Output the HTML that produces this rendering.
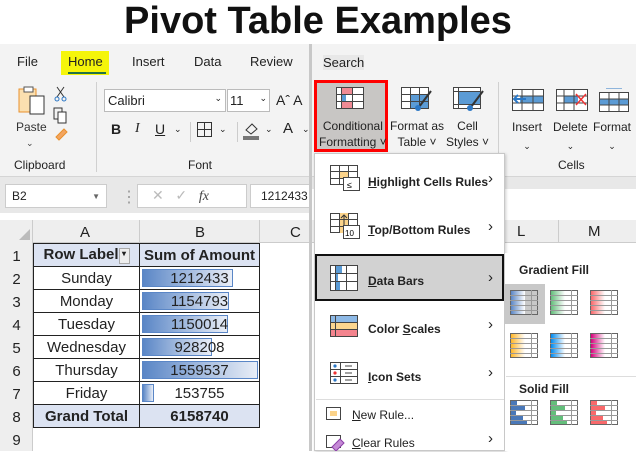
<!DOCTYPE html>
<html><head><meta charset="utf-8"><style>
*{margin:0;padding:0;box-sizing:border-box}
body{width:636px;height:451px;position:relative;overflow:hidden;background:#fff;font-family:"Liberation Sans",sans-serif;color:#222}
.a{position:absolute;white-space:nowrap}
.c{font-family:"Liberation Sans",sans-serif}
.grid td{border:1px solid #222;height:23px;font-size:15px;text-align:center;padding:0;position:relative}
.bar{position:absolute;left:2px;top:2px;height:18px;border:1px solid #5a86c6;background:linear-gradient(90deg,#5a86c6,#e9eef7)}
.grid td span{position:relative}
.ch{position:absolute;left:488px;font-size:15px}
</style></head><body>
<div class="a" style="left:0;top:0px;width:636px;text-align:center;font-size:38px;font-weight:bold;color:#111">Pivot Table Examples</div>

<div class="a" style="left:0;top:44px;width:311px;height:407px;background:#f3f3f3"></div>
<div class="a c" style="left:17px;top:54px;font-size:13px">File</div>
<div class="a" style="left:61px;top:51px;width:48px;height:24px;background:#f5f50a"></div>
<div class="a c" style="left:68px;top:54px;font-size:13px">Home</div>
<div class="a" style="left:68px;top:72px;width:38px;height:2px;background:#217346"></div>
<div class="a c" style="left:132px;top:54px;font-size:13px">Insert</div>
<div class="a c" style="left:194px;top:54px;font-size:13px">Data</div>
<div class="a c" style="left:250px;top:54px;font-size:13px">Review</div>
<svg class="a" style="left:16px;top:84px" width="54" height="74"><rect x="3" y="5" width="17" height="23" fill="#fbe0b0" stroke="#e8902c"/><rect x="14" y="12" width="14" height="18" fill="#fff" stroke="#333"/><rect x="8" y="3" width="9" height="5" fill="#fff" stroke="#555"/><text x="0" y="47" font-size="12" fill="#333" font-family="Liberation Sans">Paste</text><text x="10" y="62" font-size="9" fill="#444">⌄</text></svg>
<svg class="a" style="left:52px;top:85px" width="20" height="66"><path d="M5 2 L12 12 M12 2 L5 12" stroke="#333"/><circle cx="5" cy="14" r="2" fill="none" stroke="#2b77c5"/><circle cx="12" cy="14" r="2" fill="none" stroke="#2b77c5"/><rect x="2" y="23" width="8" height="11" fill="none" stroke="#333"/><rect x="6" y="27" width="8" height="11" fill="#fff" stroke="#333"/><path d="M4 52 l8 -8 l3 3 l-8 8z" fill="#f3a560" stroke="#e8902c"/></svg>
<div class="a c" style="left:14px;top:158px;font-size:12px">Clipboard</div>
<div class="a" style="left:96px;top:82px;width:1px;height:90px;background:#d0d0d0"></div>
<div class="a" style="left:104px;top:89px;width:122px;height:23px;background:#fff;border:1px solid #bbb;font-size:13px;padding:3px 3px">Calibri<span style="float:right;font-size:9px">⌄</span></div>
<div class="a" style="left:227px;top:89px;width:43px;height:23px;background:#fff;border:1px solid #bbb;font-size:13px;padding:3px 2px">11<span style="float:right;font-size:9px">⌄</span></div>
<div class="a c" style="left:276px;top:92px;font-size:14px">Aˆ A</div>
<div class="a c" style="left:111px;top:121px;font-size:14px;font-weight:bold">B</div>
<div class="a" style="left:135px;top:121px;font-size:14px;font-style:italic;font-family:'Liberation Serif'">I</div>
<div class="a c" style="left:155px;top:121px;font-size:14px;text-decoration:underline">U</div>
<div class="a" style="left:174px;top:124px;font-size:9px">⌄</div>
<div class="a" style="left:190px;top:122px;width:1px;height:20px;background:#ccc"></div>
<svg class="a" style="left:197px;top:122px" width="16" height="16"><rect x=".5" y=".5" width="14" height="14" fill="none" stroke="#333"/><path d="M7.5 0V15M0 7.5H15" stroke="#333"/></svg>
<div class="a" style="left:219px;top:124px;font-size:9px">⌄</div>
<div class="a" style="left:237px;top:122px;width:1px;height:20px;background:#ccc"></div>
<svg class="a" style="left:243px;top:120px" width="18" height="20"><path d="M3 10 L9 4 L14 9 L8 14z" fill="none" stroke="#333"/><rect x="0" y="16" width="16" height="4" fill="#777"/></svg>
<div class="a" style="left:265px;top:124px;font-size:9px">⌄</div>
<div class="a c" style="left:283px;top:120px;font-size:15px">A</div>
<div class="a" style="left:302px;top:124px;font-size:9px">⌄</div>
<div class="a c" style="left:188px;top:158px;font-size:12px">Font</div>
<div class="a" style="left:0;top:176px;width:311px;height:1px;background:#d5d5d5"></div>
<div class="a" style="left:0;top:177px;width:311px;height:36px;background:#e8e8e8"></div>
<div class="a" style="left:5px;top:184px;width:102px;height:24px;background:#fff;border:1px solid #ccc;font-size:12px;padding:4px 6px">B2<span style="float:right;color:#666;font-size:8px;margin-top:3px">▼</span></div>
<div class="a" style="left:121px;top:187px;color:#999">⋮</div>
<div class="a" style="left:137px;top:184px;width:110px;height:24px;background:#fff;border:1px solid #ccc;color:#bbb;font-size:14px;padding:2px 14px">✕ &nbsp; ✓ &nbsp;&nbsp;<i style="color:#444;font-family:'Liberation Serif'">fx</i></div>
<div class="a" style="left:250px;top:184px;width:61px;height:24px;background:#fff;border:1px solid #ccc;font-size:12px;padding:4px 10px">1212433</div>
<div class="a" style="left:0;top:213px;width:311px;height:238px;background:#fff"></div>
<div class="a" style="left:0;top:220px;width:311px;height:23px;background:#eee;border-bottom:1px solid #ccc"></div>
<div class="a" style="left:0;top:220px;width:33px;height:231px;background:#eee;border-right:1px solid #ccc"></div>
<div class="a" style="left:19px;top:229px;width:0;height:0;border-left:11px solid transparent;border-bottom:11px solid #bbb"></div>
<div class="a c" style="left:80px;top:224px;font-size:15px">A</div>
<div class="a c" style="left:195px;top:224px;font-size:15px">B</div>
<div class="a c" style="left:290px;top:224px;font-size:15px">C</div>
<div class="a" style="left:139px;top:220px;width:1px;height:23px;background:#ccc"></div>
<div class="a" style="left:259px;top:220px;width:1px;height:23px;background:#ccc"></div>
<div class="a c" style="left:0;top:245px;width:33px;text-align:center;font-size:15px;line-height:23px">1<br>2<br>3<br>4<br>5<br>6<br>7<br>8<br>9</div>
<table class="a grid" style="left:33px;top:243px;border-collapse:collapse;width:227px">
<tr style="background:#dce3f2;font-weight:bold"><td style="width:106px">Row Label<span style="display:inline-block;width:11px;height:16px;border:1px solid #aaa;background:#eee;font-size:8px;vertical-align:middle">▾</span></td><td>Sum of Amount</td></tr>
<tr><td>Sunday</td><td><div class="bar" style="width:91px"></div><span>1212433</span></td></tr>
<tr><td>Monday</td><td><div class="bar" style="width:87px"></div><span>1154793</span></td></tr>
<tr><td>Tuesday</td><td><div class="bar" style="width:86px"></div><span>1150014</span></td></tr>
<tr><td>Wednesday</td><td><div class="bar" style="width:70px"></div><span>928208</span></td></tr>
<tr><td>Thursday</td><td><div class="bar" style="width:116px"></div><span>1559537</span></td></tr>
<tr><td>Friday</td><td><div class="bar" style="width:12px"></div><span>153755</span></td></tr>
<tr style="background:#dce3f2;font-weight:bold"><td>Grand Total</td><td>6158740</td></tr>
</table>
<div class="a" style="left:309px;top:44px;width:3px;height:407px;background:#c8c8c8"></div>

<div class="a" style="left:312px;top:44px;width:324px;height:407px;background:#f3f3f3"></div>
<div class="a c" style="left:323px;top:55px;font-size:13px;background:#e8e8e8">Search</div>
<div class="a" style="left:314px;top:80px;width:74px;height:72px;background:#c8c6c4;border:3px solid #f00"></div>
<svg class="a" style="left:336px;top:87px" width="28" height="24"><rect x=".5" y=".5" width="27" height="21" fill="#fff" stroke="#444"/><rect x="5" y="1" width="11" height="6" fill="#f08a94"/><rect x="5" y="15" width="11" height="6" fill="#f08a94"/><rect x="5" y="8" width="5" height="7" fill="#5b9bd5"/><path d="M0 7.5H28M0 14.5H28M5.5 0V22M16.5 0V22" stroke="#444"/></svg>
<div class="a c" style="left:319px;top:118px;font-size:12px;line-height:16px;text-align:center">Conditional<br>Formatting ˅</div>
<svg class="a" style="left:401px;top:87px" width="32" height="26"><rect x=".5" y=".5" width="27" height="21" fill="#fff" stroke="#444"/><rect x="10" y="8" width="17" height="13" fill="#5b9bd5"/><path d="M0 7.5H28M0 14.5H28M9.5 0V22M18.5 0V22" stroke="#444"/><path d="M30 4 L18 20" stroke="#333" stroke-width="2"/><circle cx="17" cy="21" r="3" fill="#2b77c5"/></svg>
<div class="a c" style="left:390px;top:118px;font-size:12px;line-height:16px;text-align:center">Format as<br>Table ˅</div>
<svg class="a" style="left:453px;top:87px" width="32" height="26"><rect x=".5" y=".5" width="27" height="21" fill="#fff" stroke="#444"/><rect x="6" y="5" width="21" height="12" fill="#5b9bd5"/><path d="M0 4.5H28M0 17.5H28M5.5 0V22" stroke="#444"/><path d="M30 4 L18 20" stroke="#333" stroke-width="2"/><circle cx="17" cy="21" r="3" fill="#2b77c5"/></svg>
<div class="a c" style="left:446px;top:118px;font-size:12px;line-height:16px;text-align:center">Cell<br>Styles ˅</div>
<div class="a" style="left:498px;top:82px;width:1px;height:90px;background:#d0d0d0"></div>
<svg class="a" style="left:512px;top:88px" width="124" height="26"><rect x=".5" y="1.5" width="31" height="21" fill="#fff" stroke="#444"/><rect x="8" y="8" width="23" height="7" fill="#5b9bd5"/><path d="M0 8H32M0 15H32M10 1V23M21 1V23" stroke="#444"/><path d="M14 11H2 M6 7 L2 11 L6 15" stroke="#2b77c5" stroke-width="2" fill="none"/>
<rect x="44.5" y="1.5" width="31" height="21" fill="#fff" stroke="#444"/><rect x="52" y="8" width="14" height="7" fill="#5b9bd5"/><path d="M44 8H76M44 15H76M52 1V23M62 1V23" stroke="#444"/><path d="M64 6 L74 17 M74 6 L64 17" stroke="#e33" stroke-width="1.5"/>
<rect x="87.5" y="4.5" width="29" height="19" fill="#fff" stroke="#444"/><rect x="88" y="11" width="28" height="6" fill="#5b9bd5"/><path d="M87 11H117M87 17H117M97 4V24M107 4V24" stroke="#444"/><path d="M94 0H110" stroke="#2b77c5"/></svg>
<div class="a c" style="left:512px;top:118px;font-size:12px;line-height:18px;text-align:center">Insert<br><span style="font-size:9px">⌄</span></div>
<div class="a c" style="left:553px;top:118px;font-size:12px;line-height:18px;text-align:center">Delete<br><span style="font-size:9px">⌄</span></div>
<div class="a c" style="left:593px;top:118px;font-size:12px;line-height:18px;text-align:center">Format<br><span style="font-size:9px">⌄</span></div>
<div class="a c" style="left:558px;top:158px;font-size:12px">Cells</div>
<div class="a" style="left:312px;top:176px;width:324px;height:1px;background:#d5d5d5"></div>
<div class="a" style="left:312px;top:177px;width:324px;height:12px;background:#e8e8e8"></div>
<div class="a" style="left:312px;top:189px;width:324px;height:262px;background:#fff"></div>
<div class="a" style="left:312px;top:220px;width:324px;height:23px;background:#eee;border-bottom:1px solid #ccc"></div>
<div class="a c" style="left:517px;top:223px;font-size:15px">L</div>
<div class="a c" style="left:588px;top:223px;font-size:15px">M</div>
<div class="a" style="left:558px;top:220px;width:1px;height:23px;background:#ccc"></div>
<div class="a" style="left:314px;top:153px;width:191px;height:298px;background:#fff;border:1px solid #c8c8c8;box-shadow:1px 1px 3px rgba(0,0,0,.2)"></div>
<div class="a" style="left:315px;top:254px;width:189px;height:47px;background:#d2d2d2;border:2px solid #111"></div>
<svg class="a" style="left:330px;top:165px" width="32" height="270">
<g><rect x=".5" y=".5" width="27" height="19" fill="#fff" stroke="#444"/><rect x="9" y="6" width="9" height="7" fill="#fbd38a"/><path d="M0 6.5H28M0 13.5H28M9.5 0V20M18.5 0V20" stroke="#444"/><rect x="13.5" y="12.5" width="16" height="13" fill="#fff" stroke="#444"/><text x="17" y="23" font-size="9">≤</text></g>
<g transform="translate(0,48)"><rect x=".5" y=".5" width="27" height="19" fill="#fff" stroke="#444"/><rect x="9" y="0" width="9" height="20" fill="#fbd38a"/><path d="M0 6.5H28M0 13.5H28M9.5 0V20M18.5 0V20" stroke="#444"/><path d="M14 12V2 M11 5 L14 2 L17 5" stroke="#333" fill="none"/><rect x="13.5" y="12.5" width="16" height="13" fill="#fff" stroke="#444"/><text x="15" y="23" font-size="8">10</text></g>
<g transform="translate(0,100)"><rect x=".5" y=".5" width="27" height="25" fill="#fff" stroke="#444"/><rect x="5" y="1" width="7" height="7" fill="#5b9bd5"/><rect x="5" y="8" width="3" height="8" fill="#5b9bd5"/><rect x="5" y="16" width="5" height="9" fill="#5b9bd5"/><path d="M0 8.5H28M0 16.5H28M5.5 0V26M16.5 0V26" stroke="#444"/></g>
<g transform="translate(0,150)"><rect x="0" y="0" width="28" height="7" fill="#8db9e6"/><rect x="0" y="7" width="28" height="7" fill="#fcd68f"/><rect x="0" y="14" width="28" height="7" fill="#f4848e"/><rect x=".5" y=".5" width="27" height="21" fill="none" stroke="#444"/><path d="M0 7.5H28M0 14.5H28M5.5 0V22" stroke="#444"/></g>
<g transform="translate(0,197)"><rect x=".5" y=".5" width="27" height="21" fill="#fff" stroke="#444"/><path d="M0 7.5H28M0 14.5H28M10.5 0V22" stroke="#444"/><circle cx="5" cy="4" r="1.6" fill="#2b77c5"/><circle cx="5" cy="11" r="1.6" fill="#e33"/><circle cx="5" cy="18" r="1.6" fill="#2b77c5"/><path d="M15 4H22M15 11H22M15 18H22" stroke="#444"/></g>
</svg>
<div class="a c" style="left:368px;top:175px;font-size:12px;font-weight:bold"><u>H</u>ighlight Cells Rules</div>
<div class="a c" style="left:368px;top:223px;font-size:12px;font-weight:bold"><u>T</u>op/Bottom Rules</div>
<div class="a c" style="left:368px;top:274px;font-size:12px;font-weight:bold"><u>D</u>ata Bars</div>
<div class="a c" style="left:368px;top:322px;font-size:12px;font-weight:bold">Color <u>S</u>cales</div>
<div class="a c" style="left:368px;top:370px;font-size:12px;font-weight:bold"><u>I</u>con Sets</div>
<div class="ch" style="top:170px">›</div>
<div class="ch" style="top:218px">›</div>
<div class="ch" style="top:269px">›</div>
<div class="ch" style="top:316px">›</div>
<div class="ch" style="top:364px">›</div>
<div class="a" style="left:316px;top:399px;width:188px;height:1px;background:#ddd"></div>
<svg class="a" style="left:326px;top:407px" width="20" height="44"><rect x=".5" y=".5" width="14" height="12" fill="#fff" stroke="#444"/><rect x="4" y="4" width="7" height="5" fill="#fbd38a"/><rect x=".5" y="28.5" width="14" height="12" fill="#fff" stroke="#444"/><path d="M6 40 l8 -8 l4 4 l-8 8z" fill="#c58ad6" stroke="#8b3fa8"/></svg>
<div class="a c" style="left:352px;top:408px;font-size:12px"><u>N</u>ew Rule...</div>
<div class="a c" style="left:352px;top:436px;font-size:12px"><u>C</u>lear Rules</div>
<div class="ch" style="top:430px">›</div>
<div class="a" style="left:504px;top:253px;width:132px;height:198px;background:#fff;border-left:1px solid #c8c8c8"></div>
<div class="a c" style="left:519px;top:263px;font-size:12px;font-weight:bold">Gradient Fill</div>
<div class="a" style="left:505px;top:284px;width:40px;height:40px;background:#c8c8c8"></div>
<div class="a" style="left:506px;top:376px;width:130px;height:1px;background:#ddd"></div>
<div class="a c" style="left:519px;top:382px;font-size:12px;font-weight:bold">Solid Fill</div>
<svg class="a" style="left:510px;top:290px" width="126" height="161">
<defs>
<linearGradient id="g1"><stop offset="0" stop-color="#5a86c6"/><stop offset="1" stop-color="#fff"/></linearGradient>
<linearGradient id="g2"><stop offset="0" stop-color="#63be7b"/><stop offset="1" stop-color="#fff"/></linearGradient>
<linearGradient id="g3"><stop offset="0" stop-color="#f8696b"/><stop offset="1" stop-color="#fff"/></linearGradient>
<linearGradient id="g4"><stop offset="0" stop-color="#ffb628"/><stop offset="1" stop-color="#fff"/></linearGradient>
<linearGradient id="g5"><stop offset="0" stop-color="#008aef"/><stop offset="1" stop-color="#fff"/></linearGradient>
<linearGradient id="g6"><stop offset="0" stop-color="#d6007b"/><stop offset="1" stop-color="#fff"/></linearGradient>
<g id="ic"><rect x=".5" y=".5" width="27" height="24" fill="none" stroke="#666"/><path d="M0 5.5H28M0 10.5H28M0 15.5H28M0 20.5H28M21.5 0V25" stroke="#999"/></g>
</defs>
<g><rect x="1" y="1" width="14" height="23" fill="url(#g1)"/><use href="#ic"/></g>
<g transform="translate(40,0)"><rect x="1" y="1" width="14" height="23" fill="url(#g2)"/><use href="#ic"/></g>
<g transform="translate(80,0)"><rect x="1" y="1" width="14" height="23" fill="url(#g3)"/><use href="#ic"/></g>
<g transform="translate(0,43)"><rect x="1" y="1" width="14" height="23" fill="url(#g4)"/><use href="#ic"/></g>
<g transform="translate(40,43)"><rect x="1" y="1" width="14" height="23" fill="url(#g5)"/><use href="#ic"/></g>
<g transform="translate(80,43)"><rect x="1" y="1" width="14" height="23" fill="url(#g6)"/><use href="#ic"/></g>
<g transform="translate(0,110)"><path d="M1 3h6M1 8h14M1 13h5M1 18h12M1 23h16" stroke="#4a78b8" stroke-width="4"/><use href="#ic"/></g>
<g transform="translate(40,110)"><path d="M1 3h6M1 8h14M1 13h5M1 18h12M1 23h16" stroke="#63be7b" stroke-width="4"/><use href="#ic"/></g>
<g transform="translate(80,110)"><path d="M1 3h6M1 8h14M1 13h5M1 18h12M1 23h16" stroke="#f8696b" stroke-width="4"/><use href="#ic"/></g>
</svg>
</body></html>
